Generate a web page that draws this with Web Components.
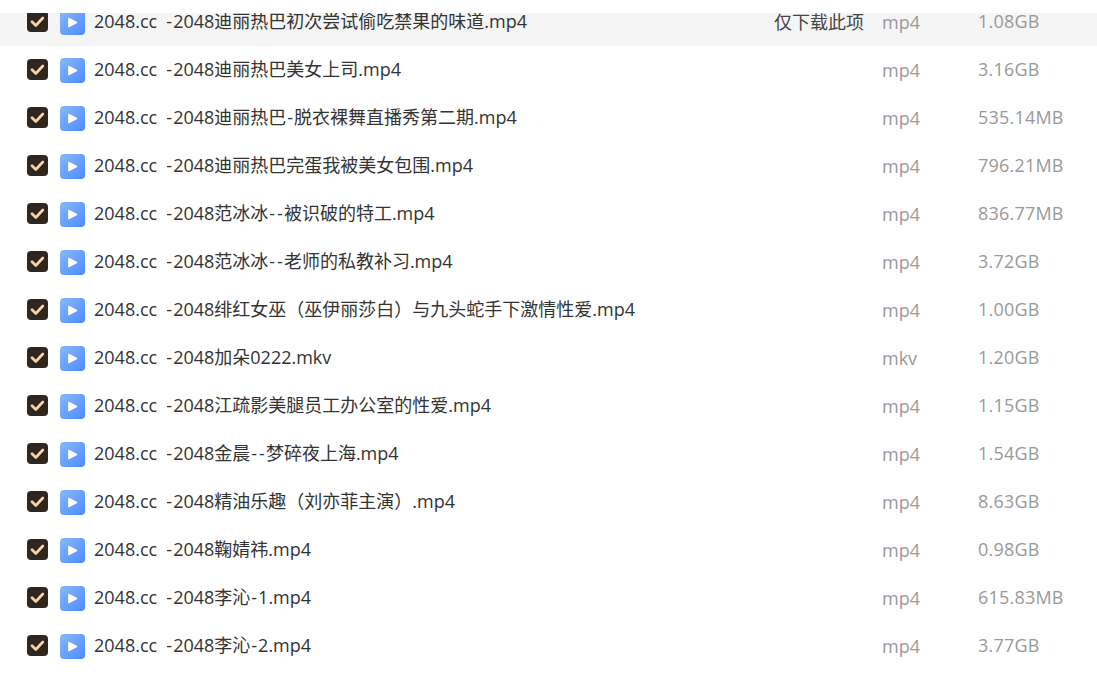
<!DOCTYPE html>
<html>
<head>
<meta charset="utf-8">
<style>
    html, body { margin: 0; padding: 0; background: #fff; }
</style>
</head>
<body>
<file-list>
    <file-row name="2048.cc -2048迪丽热巴初次尝试偷吃禁果的味道.mp4" type="mp4" size="1.08GB" active></file-row>
    <file-row name="2048.cc -2048迪丽热巴美女上司.mp4" type="mp4" size="3.16GB"></file-row>
    <file-row name="2048.cc -2048迪丽热巴-脱衣裸舞直播秀第二期.mp4" type="mp4" size="535.14MB"></file-row>
    <file-row name="2048.cc -2048迪丽热巴完蛋我被美女包围.mp4" type="mp4" size="796.21MB"></file-row>
    <file-row name="2048.cc -2048范冰冰--被识破的特工.mp4" type="mp4" size="836.77MB"></file-row>
    <file-row name="2048.cc -2048范冰冰--老师的私教补习.mp4" type="mp4" size="3.72GB"></file-row>
    <file-row name="2048.cc -2048绯红女巫（巫伊丽莎白）与九头蛇手下激情性爱.mp4" type="mp4" size="1.00GB"></file-row>
    <file-row name="2048.cc -2048加朵0222.mkv" type="mkv" size="1.20GB"></file-row>
    <file-row name="2048.cc -2048江疏影美腿员工办公室的性爱.mp4" type="mp4" size="1.15GB"></file-row>
    <file-row name="2048.cc -2048金晨--梦碎夜上海.mp4" type="mp4" size="1.54GB"></file-row>
    <file-row name="2048.cc -2048精油乐趣（刘亦菲主演）.mp4" type="mp4" size="8.63GB"></file-row>
    <file-row name="2048.cc -2048鞠婧祎.mp4" type="mp4" size="0.98GB"></file-row>
    <file-row name="2048.cc -2048李沁-1.mp4" type="mp4" size="615.83MB"></file-row>
    <file-row name="2048.cc -2048李沁-2.mp4" type="mp4" size="3.77GB"></file-row>
</file-list>

<script>
class FileList extends HTMLElement {
    constructor() {
        super();
        this.shadow = this.attachShadow({ mode: 'open' });
    }

    connectedCallback() {
        this.shadow.innerHTML = `
            <style>
                :host {
                    display: block;
                    height: 697px;
                    padding-top: 13px;
                    box-sizing: border-box;
                    background: #fff;
                    font-family: "Open Sans", "Noto Sans CJK SC", sans-serif;
                }
                .scroller {
                    height: 100%;
                    overflow: hidden;
                }
                .rows {
                    margin-top: -15px;
                }
            </style>
            <div class="scroller"><div class="rows"><slot></slot></div></div>
        `;
    }
}

class FileRow extends HTMLElement {
    constructor() {
        super();
        this.shadow = this.attachShadow({ mode: 'open' });
    }

    connectedCallback() {
        const active = this.hasAttribute('active');
        // the hyphens are wider in the original font
        const name = this.getAttribute('name').replace(/-/g, '<span class="dash">-</span>');
        this.shadow.innerHTML = `
            <style>
                :host {
                    display: grid;
                    grid-template-columns: 67px 1fr auto 96px 119px;
                    align-items: center;
                    height: 48px;
                    padding-left: 27px;
                    font-size: 18px;
                    color: #333;
                    background: ${active ? '#f5f5f5' : 'transparent'};
                }
                .left {
                    display: flex;
                    align-items: center;
                    gap: 12px;
                }
                svg { display: block; }
                .check { margin-bottom: 1px; }
                .play { margin-top: 1px; }
                .name {
                    white-space: nowrap;
                    word-spacing: 3.5px;
                    padding-bottom: 4px;
                }
                .dash { margin: 0 1px; }
                .hint { color: #444; padding: 0 18px 2px 0; }
                .type, .size { color: #999; }
                .size { letter-spacing: 0.2px; padding-bottom: 2px; }
            </style>
            <div class="left">
                <svg class="check" width="21" height="21" viewBox="0 0 21 21">
                    <rect width="21" height="21" rx="4" fill="#2e2620"/>
                    <path d="M5 10.7l3.8 3.8 7-7.5" fill="none" stroke="#fbd3a0" stroke-width="2.7" stroke-linecap="round" stroke-linejoin="round"/>
                </svg>
                <svg class="play" width="25" height="25" viewBox="0 0 25 25">
                    <defs>
                        <linearGradient id="g" x1="0" y1="0" x2="1" y2="1">
                            <stop offset="0" stop-color="#8ab8fb"/>
                            <stop offset="1" stop-color="#4a8bfd"/>
                        </linearGradient>
                    </defs>
                    <rect width="25" height="25" rx="4" fill="url(#g)"/>
                    <path d="M8.7 8v9l8.5-4.5z" fill="#fff" stroke="#fff" stroke-width="1" stroke-linejoin="round"/>
                </svg>
            </div>
            <div class="name">${name}</div>
            <div class="hint">${active ? '仅下载此项' : ''}</div>
            <div class="type">${this.getAttribute('type')}</div>
            <div class="size">${this.getAttribute('size')}</div>
        `;
    }
}

window.customElements.define('file-list', FileList);
window.customElements.define('file-row', FileRow);
</script>
</body>
</html>
